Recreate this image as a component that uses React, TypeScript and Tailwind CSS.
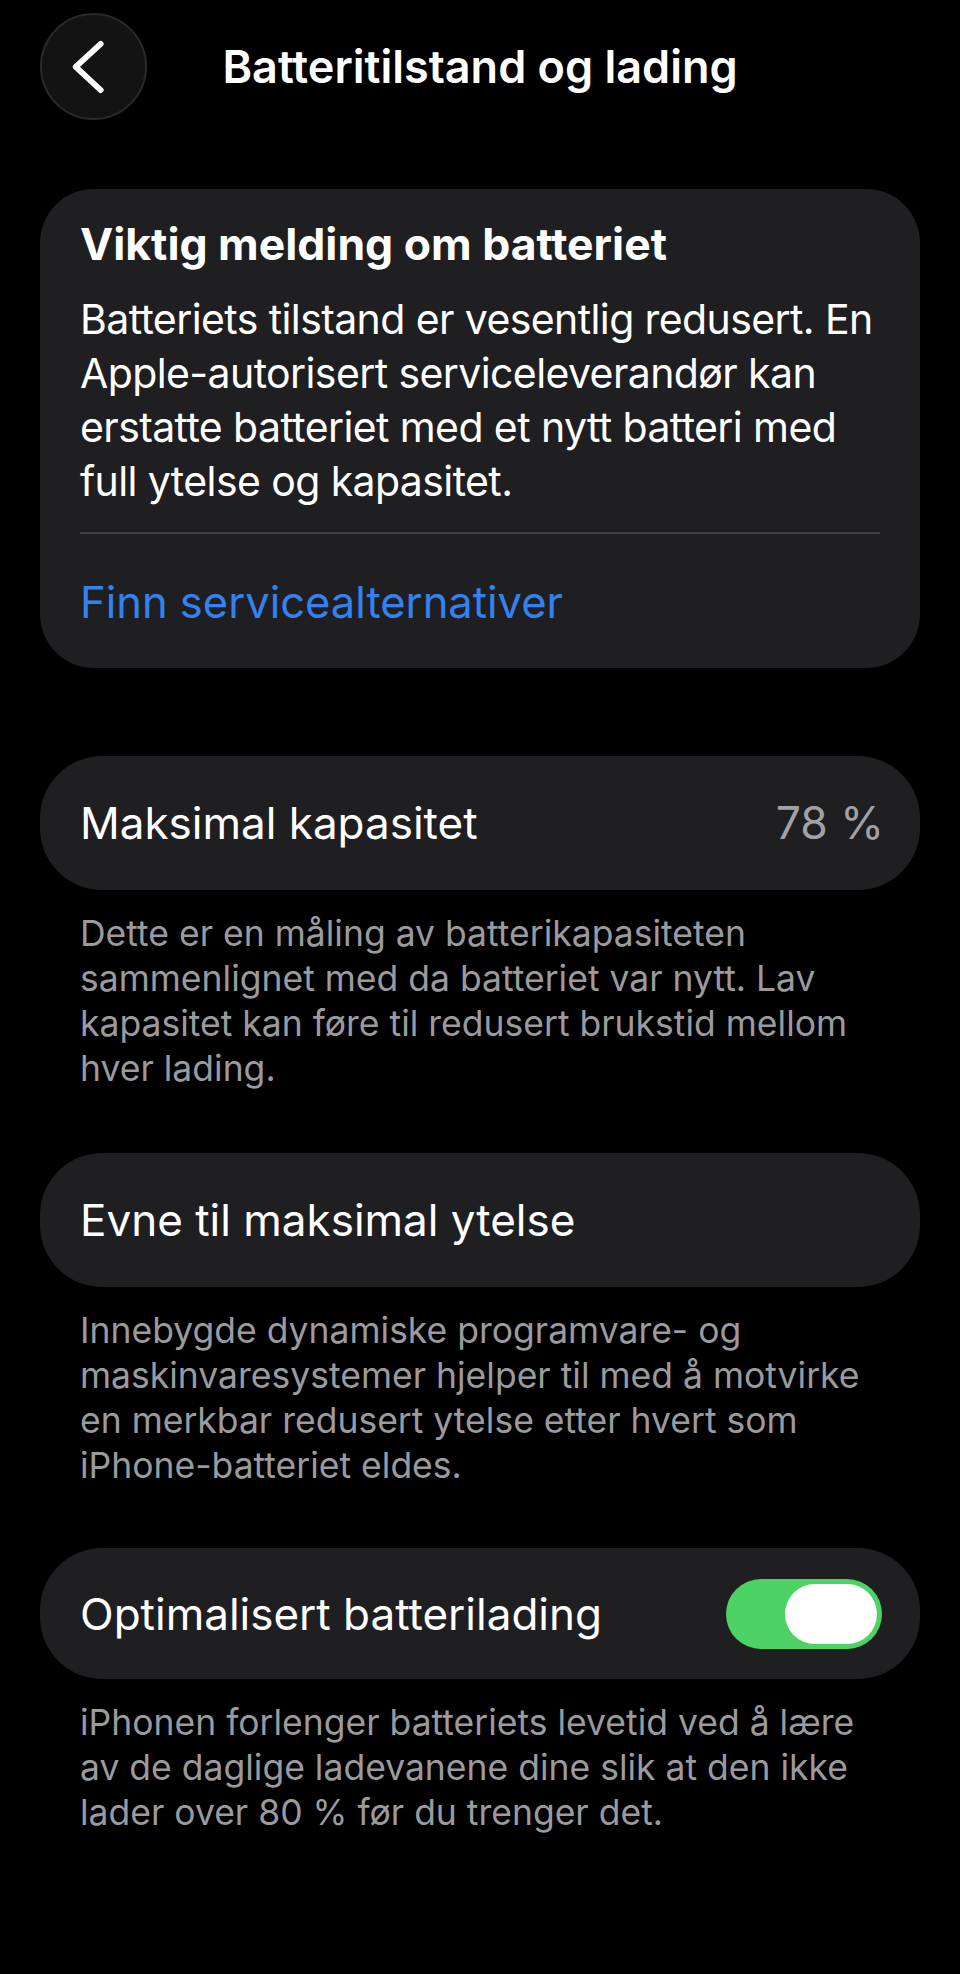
import React from "react";

const font = { fontFamily: "Inter, 'Noto Sans', sans-serif" };

function BackButton() {
  return (
    <button className="flex h-[107px] w-[107px] items-center justify-center rounded-full border-2 border-[#2a2a2c] bg-[#131313]">
      <svg width="107" height="107" viewBox="0 0 107 107" fill="none">
        <polyline
          points="61,30 35,54 61,78"
          stroke="white"
          strokeWidth="6"
          strokeLinecap="round"
          strokeLinejoin="round"
        />
      </svg>
    </button>
  );
}

function Toggle() {
  return (
    <div className="flex h-[70px] w-[156px] items-center justify-end rounded-full bg-[#4cd364] pr-[5px]">
      <div className="h-[60px] w-[92px] rounded-full bg-white" />
    </div>
  );
}

function Row({ label, right }: { label: string; right?: React.ReactNode }) {
  return (
    <div className="flex h-[134px] items-center justify-between rounded-[62px] bg-[#1f1f21] pl-10 pr-[36px]">
      <span className="text-[44px] leading-[54px] text-white">{label}</span>
      {right}
    </div>
  );
}

// footer lines are broken by hand to follow the screenshot
function Footer({ lines }: { lines: string[] }) {
  return (
    <div className="px-20 pt-[21px] text-[35.5px] leading-[45px] text-[#9a9a9f]">
      {lines.map((l) => (
        <p key={l} className="whitespace-nowrap">
          {l}
        </p>
      ))}
    </div>
  );
}

const body = [
  "Batteriets tilstand er vesentlig redusert. En",
  "Apple-autorisert serviceleverandør kan",
  "erstatte batteriet med et nytt batteri med",
  "full ytelse og kapasitet.",
];

export default function App() {
  return (
    <div className="min-h-[1974px] w-[960px] bg-black" style={font}>
      <div className="px-10">
        <header className="grid grid-cols-[107px_1fr_107px] items-center pt-[13px]">
          <BackButton />
          <h1 className="text-center text-[45px] font-semibold leading-[52px] text-white">
            Batteritilstand og lading
          </h1>
          <div />
        </header>

        <section className="mt-[69px] rounded-[54px] bg-[#1f1f21] px-10 pb-[39px] pt-[29px]">
          <h2 className="text-[44.5px] font-bold leading-[52px] text-white">
            Viktig melding om batteriet
          </h2>
          <div className="mt-[22px] text-[41px] leading-[54px] tracking-[-0.6px] text-white">
            {body.map((l) => (
              <p key={l} className="whitespace-nowrap">
                {l}
              </p>
            ))}
          </div>
          <div className="mt-[24px] h-[2px] bg-[#3f3f43]" />
          <a className="mt-[41px] block text-[43.5px] leading-[54px] text-[#3382ee]">
            Finn servicealternativer
          </a>
        </section>

        <div className="mt-[88px]">
          <Row
            label="Maksimal kapasitet"
            right={<span className="text-[44.5px] leading-[54px] text-[#a1a1a6]">78 %</span>}
          />
        </div>
      </div>
      <Footer
        lines={[
          "Dette er en måling av batterikapasiteten",
          "sammenlignet med da batteriet var nytt. Lav",
          "kapasitet kan føre til redusert brukstid mellom",
          "hver lading.",
        ]}
      />

      <div className="mt-[62px] px-10">
        <Row label="Evne til maksimal ytelse" />
      </div>
      <Footer
        lines={[
          "Innebygde dynamiske programvare- og",
          "maskinvaresystemer hjelper til med å motvirke",
          "en merkbar redusert ytelse etter hvert som",
          "iPhone-batteriet eldes.",
        ]}
      />

      <div className="mt-[60px] px-10">
        <div className="flex h-[131px] items-center justify-between rounded-[62px] bg-[#1f1f21] pl-10 pr-[38px]">
          <span className="text-[44px] leading-[54px] text-white">
            Optimalisert batterilading
          </span>
          <Toggle />
        </div>
      </div>
      <Footer
        lines={[
          "iPhonen forlenger batteriets levetid ved å lære",
          "av de daglige ladevanene dine slik at den ikke",
          "lader over 80 % før du trenger det.",
        ]}
      />
    </div>
  );
}
